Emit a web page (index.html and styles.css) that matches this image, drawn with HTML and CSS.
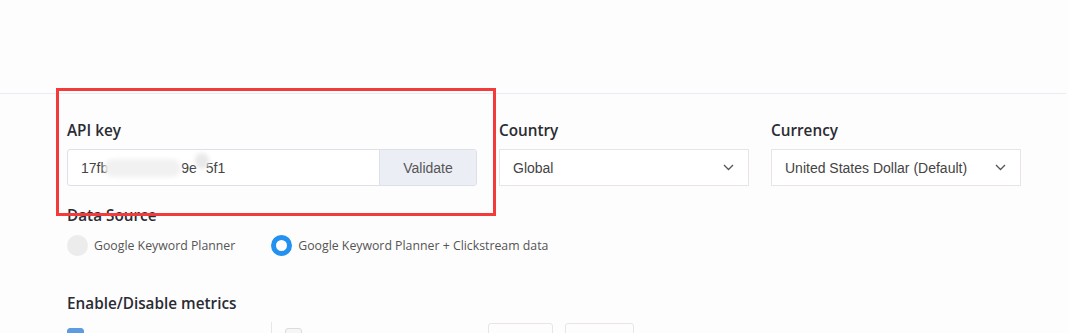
FILE: index.html
```html
<!DOCTYPE html>
<html lang="en">
<head>
  <meta charset="UTF-8">
  <meta name="viewport" content="width=device-width, initial-scale=1.0">
  <title>Settings - API</title>
  <link rel="stylesheet" href="styles.css">
</head>
<body>
  <div class="topbar"></div>

  <div class="settings">
    <div class="field-row">
      <div class="field field-key">
        <label class="field-label">API key</label>
        <div class="key-input">
          <div class="key-value">
            <span>17fb</span><span class="smudge smudge-long"></span><span>9e</span><span class="smudge smudge-dot"></span><span>5f1</span>
          </div>
          <button class="validate-btn" type="button">Validate</button>
        </div>
      </div>

      <div class="field">
        <label class="field-label">Country</label>
        <div class="select-box">
          <span>Global</span>
          <svg class="chevron" width="11" height="7" viewBox="0 0 11 7"><path d="M1 1l4.5 4.5L10 1" fill="none" stroke="#555" stroke-width="1.3"/></svg>
        </div>
      </div>

      <div class="field">
        <label class="field-label">Currency</label>
        <div class="select-box">
          <span>United States Dollar (Default)</span>
          <svg class="chevron" width="11" height="7" viewBox="0 0 11 7"><path d="M1 1l4.5 4.5L10 1" fill="none" stroke="#555" stroke-width="1.3"/></svg>
        </div>
      </div>
    </div>

    <div class="field-label data-label">Data Source</div>
    <div class="radio-row">
      <label class="radio"><span class="radio-dot"></span>Google Keyword Planner</label>
      <label class="radio"><span class="radio-dot checked"></span>Google Keyword Planner + Clickstream data</label>
    </div>

    <div class="field-label metrics-label">Enable/Disable metrics</div>
    <div class="metrics-row">
      <div class="metric-col">
        <span class="check on"></span>
      </div>
      <div class="metric-col metric-col-2">
        <span class="check"></span>
        <span class="metric-name">Published date</span>
        <span class="mini-box mini-a"></span>
        <span class="mini-box mini-b"></span>
      </div>
    </div>

    <div class="highlight"></div>
  </div>
</body>
</html>
```

FILE: styles.css
```css
/* General */
body {
  margin: 0;
  background-color: #fdfdfd;
  font-family: "Open Sans", "Noto Sans", sans-serif;
  color: #2b2b33;
  overflow: hidden;
}

.topbar {
  height: 93px;
  width: 1066px;
  border-bottom: 1px solid #ebebf3;
}

.settings {
  position: relative;
  padding: 26px 0 0 67px;
}

.field-label {
  display: block;
  font-size: 15.3px;
  font-weight: 600;
  line-height: 20px;
  color: #2b2b33;
}

/* Top fields */
.field-row {
  display: flex;
  gap: 22px;
}

.field {
  display: flex;
  flex-direction: column;
  gap: 9px;
  width: 250px;
}

.field-key {
  width: 410px;
}

.key-input {
  display: flex;
  height: 37px;
  box-sizing: border-box;
  border: 1px solid #dde0ea;
  border-radius: 3px;
  background-color: #fff;
  overflow: hidden;
}

.key-value {
  flex: 1;
  display: flex;
  align-items: center;
  padding-left: 13px;
  font-family: "Liberation Sans", Arial, sans-serif;
  font-size: 14px;
  color: #444;
}

.smudge {
  display: inline-block;
  background-color: #f1f1f1;
  filter: blur(2px);
}

.smudge-long {
  width: 77px;
  height: 18px;
  border-radius: 9px;
  margin: 0 0 0 -4px;
}

.smudge-dot {
  width: 14px;
  height: 16px;
  border-radius: 8px;
  margin: -14px -3px 0 -2px;
  background-color: #e9e9e9;
}

.validate-btn {
  width: 97px;
  border: none;
  border-left: 1px solid #dde0ea;
  background-color: #eceef6;
  font-family: "Liberation Sans", Arial, sans-serif;
  font-size: 14px;
  color: #555;
  padding: 0;
}

.select-box {
  display: flex;
  align-items: center;
  justify-content: space-between;
  height: 37px;
  box-sizing: border-box;
  padding: 0 14px 0 13px;
  border: 1px solid #ebe3e8;
  background-color: #fff;
  font-family: "Liberation Sans", Arial, sans-serif;
  font-size: 14px;
  color: #444;
}

/* Data source */
.data-label {
  margin-top: 19px;
}

.radio-row {
  display: flex;
  gap: 36px;
  margin-top: 10px;
  height: 21px;
}

.radio {
  display: flex;
  align-items: center;
  gap: 6px;
  font-size: 12.3px;
  color: #555;
}

.radio-dot {
  width: 21px;
  height: 21px;
  box-sizing: border-box;
  border-radius: 50%;
  background-color: #ececec;
}

.radio-dot.checked {
  background-color: #fff;
  border: 5px solid #2391f0;
}

/* Metrics */
.metrics-label {
  margin-top: 37px;
}

.metrics-row {
  display: flex;
  margin-top: 9px;
  height: 30px;
}

.metric-col {
  width: 204px;
  padding-top: 6px;
}

.metric-col-2 {
  display: flex;
  flex: none;
  width: auto;
  align-items: flex-start;
  border-left: 1px solid #e5e5ea;
  padding-left: 13px;
  padding-top: 0;
}

.check {
  display: inline-block;
  flex: none;
  width: 17px;
  height: 17px;
  box-sizing: border-box;
  border-radius: 3px;
  border: 1px solid #dcdcdc;
  background-color: #f6f6f6;
}

.check.on {
  border-color: #5e9be0;
  background-color: #5e9be0;
}

.metric-col-2 .check {
  margin-top: 6px;
}

.metric-name {
  flex: none;
  margin: 7px 0 0 16px;
  width: 170px;
  font-size: 13px;
  line-height: 18px;
  color: #333;
}

.mini-box {
  display: inline-block;
  flex: none;
  height: 30px;
  box-sizing: border-box;
  border: 1px solid #ebe3e8;
  border-radius: 3px;
  margin-top: 1px;
}

.mini-a {
  width: 65px;
}

.mini-b {
  width: 69px;
  margin-left: 12px;
}

/* Annotation box */
.highlight {
  position: absolute;
  left: 56px;
  top: -6px;
  width: 440px;
  height: 128px;
  box-sizing: border-box;
  border: 3px solid #f23c3c;
}
```
